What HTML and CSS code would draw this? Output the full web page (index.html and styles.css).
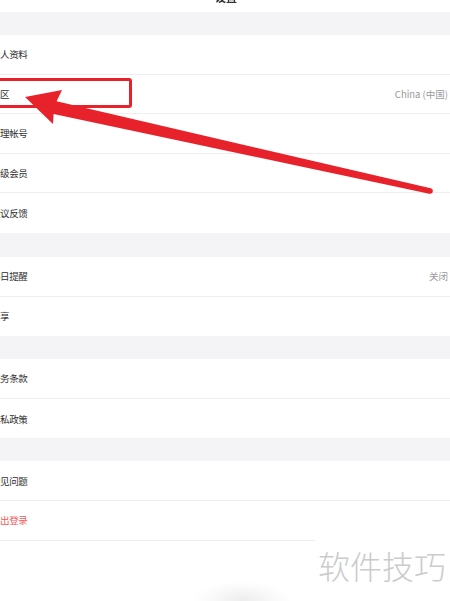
FILE: index.html
```html
<!DOCTYPE html>
<html lang="zh-CN">
<head>
<meta charset="utf-8">
<title>设置</title>
<link rel="stylesheet" href="styles.css">
</head>
<body>
<div class="screen">
  <header class="nav"><span class="nav-title">设置</span></header>
  <div class="list">
    <div class="band band-a"><span class="band-label">账号</span></div>
    <div class="row"><span class="label">个人资料</span></div>
    <div class="row"><span class="label">地区</span><span class="value">China (中国)</span></div>
    <div class="row"><span class="label">管理帐号</span></div>
    <div class="row"><span class="label">升级会员</span></div>
    <div class="row last"><span class="label">建议反馈</span></div>
    <div class="band band-b"><span class="band-label">通知</span></div>
    <div class="row"><span class="label">每日提醒</span><span class="value">关闭</span></div>
    <div class="row last"><span class="label">分享</span></div>
    <div class="band"><span class="band-label">关于</span></div>
    <div class="row"><span class="label">服务条款</span></div>
    <div class="row last"><span class="label">隐私政策</span></div>
    <div class="band"><span class="band-label">帮助</span></div>
    <div class="row"><span class="label">常见问题</span></div>
    <div class="row"><span class="label danger">退出登录</span></div>
  </div>

  <svg class="annot" width="450" height="601" viewBox="0 0 450 601" aria-hidden="true">
    <rect x="-10" y="79.5" width="140.5" height="27" rx="1.5" fill="none" stroke="#e8222b" stroke-width="3"/>
    <polygon fill="#e8222b" points="25,97 62,90 56.6,101.3 430.7,188.3 429.3,193.7 53.6,114.0 53,124"/>
    <circle cx="430" cy="191" r="2.8" fill="#e8222b"/>
  </svg>

  <div class="watermark">软件技巧</div>
  <div class="blob"></div>
</div>
</body>
</html>
```

FILE: styles.css
```css
* {
  box-sizing: border-box;
}

html, body {
  margin: 0;
  padding: 0;
  background: #ffffff;
}

body {
  font-family: "Noto Sans CJK SC", "Noto Sans", "Liberation Sans", sans-serif;
  color: #333333;
  overflow: hidden;
}

.screen {
  position: relative;
  width: 450px;
  height: 601px;
  overflow: hidden;
  background: #ffffff;
}

.nav {
  height: 12px;
  display: flex;
  justify-content: center;
  align-items: flex-start;
  overflow: hidden;
}

.nav-title {
  font-size: 11px;
  font-weight: 700;
  line-height: 11px;
  margin-top: -8px;
  margin-left: 2px;
  color: #333333;
  filter: blur(0.4px);
}

.list {
  margin-left: -9px;
  width: 459px;
  display: flex;
  flex-direction: column;
}

.band {
  height: 23px;
  background: #f4f4f6;
  display: flex;
  align-items: center;
}

.band-b {
  height: 24px;
}

.band-label {
  font-size: 8px;
  color: #c4c4c8;
  margin-left: -7px;
}

.row {
  height: 39.6px;
  display: flex;
  align-items: center;
  justify-content: space-between;
  padding-right: 2px;
  border-bottom: 1px solid #eeeeef;
  background: #ffffff;
}

.row.last {
  border-bottom: none;
}

.label {
  font-size: 9.5px;
  color: #2e2e2e;
  letter-spacing: -0.4px;
}

.label.danger {
  color: #f25a5a;
}

.value {
  font-size: 9.5px;
  color: #9a9a9c;
}

.annot {
  position: absolute;
  left: 0;
  top: 0;
  pointer-events: none;
}

.watermark {
  position: absolute;
  left: 315px;
  top: 537px;
  width: 135px;
  height: 64px;
  background: #ffffff;
  padding: 11px 0 0 3px;
  font-size: 32px;
  line-height: 34px;
  font-weight: 300;
  color: #cbcbcb;
  white-space: nowrap;
}

.blob {
  position: absolute;
  left: 195px;
  top: 582px;
  width: 95px;
  height: 36px;
  border-radius: 50%;
  background: radial-gradient(ellipse at center, rgba(215, 215, 215, 0.45) 0%, rgba(230, 230, 230, 0.2) 50%, rgba(255, 255, 255, 0) 75%);
}
```
